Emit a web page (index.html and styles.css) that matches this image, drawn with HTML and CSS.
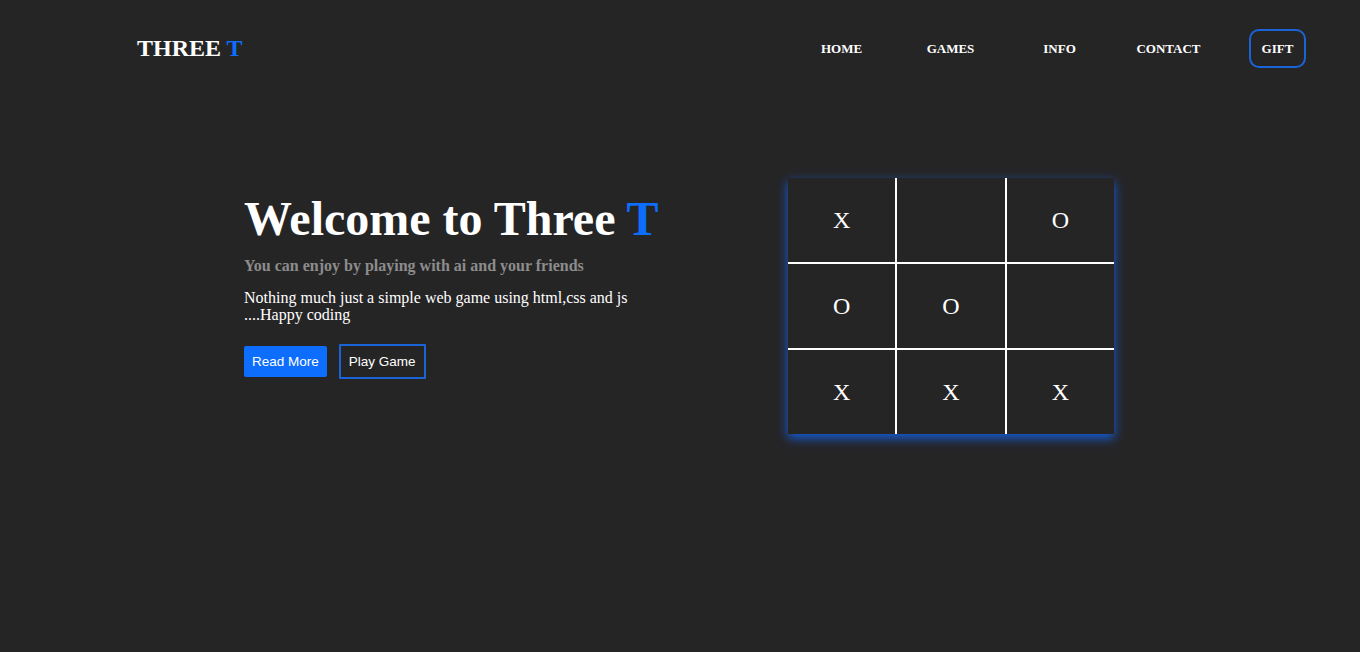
FILE: index.html
```html
<!DOCTYPE html>
<html lang="en">
<head>
<meta charset="utf-8">
<title>Three T</title>
<link rel="stylesheet" href="styles.css">
</head>
<body>
<header class="header">
  <div class="logo">THREE <span class="blue">T</span></div>
  <nav>
    <ul class="nav">
      <li><a href="#">HOME</a></li>
      <li><a href="#">GAMES</a></li>
      <li><a href="#">INFO</a></li>
      <li><a href="#">CONTACT</a></li>
      <li><a href="#" class="gift">GIFT</a></li>
    </ul>
  </nav>
</header>
<main class="hero">
  <section class="intro">
    <h1 class="title">Welcome to Three <span class="blue">T</span></h1>
    <h5 class="subtitle">You can enjoy by playing with ai and your friends</h5>
    <p class="text">Nothing much just a simple web game using html,css and js ....Happy coding</p>
    <div class="actions">
      <a href="#" class="btn btn-primary">Read More</a>
      <a href="#" class="btn btn-outline">Play Game</a>
    </div>
  </section>
  <section class="board">
    <div class="cell">X</div>
    <div class="cell"></div>
    <div class="cell">O</div>
    <div class="cell">O</div>
    <div class="cell">O</div>
    <div class="cell"></div>
    <div class="cell">X</div>
    <div class="cell">X</div>
    <div class="cell">X</div>
  </section>
</main>
</body>
</html>
```
FILE: styles.css
```css
* { box-sizing: border-box; }
html, body { margin: 0; padding: 0; }
body {
  background: #262526;
  color: #ffffff;
  font-family: "Liberation Serif", "Times New Roman", serif;
  height: 652px;
  overflow: hidden;
}
.blue { color: #0d6efd; }

.header {
  height: 96px;
  display: flex;
  align-items: center;
  justify-content: space-between;
  padding: 0 28px 0 137px;
}
.logo {
  font-size: 24px;
  font-weight: bold;
  line-height: 1;
}
.nav {
  list-style: none;
  margin: 0;
  padding: 0;
  display: flex;
  align-items: center;
}
.nav li {
  width: 109px;
  display: flex;
  justify-content: center;
}
.nav a {
  color: #ffffff;
  text-decoration: none;
  font-weight: bold;
  font-size: 13px;
  line-height: 15px;
}
.nav a.gift {
  border: 2px solid #1b63d8;
  border-radius: 10px;
  padding: 10px 11px;
  display: inline-block;
}

.hero {
  display: flex;
  align-items: flex-start;
  padding: 82px 0 0 244px;
}
.intro {
  width: 420px;
  margin-right: 124px;
  padding-top: 17px;
}
.title {
  margin: 0;
  font-size: 48px;
  line-height: 48px;
  font-weight: bold;
  white-space: nowrap;
}
.subtitle {
  margin: 13px 0 0;
  font-size: 16px;
  line-height: 20px;
  font-weight: bold;
  color: #8c8c8c;
}
.text {
  margin: 14px 0 0;
  font-size: 16px;
  line-height: 16.5px;
}
.actions {
  display: flex;
  align-items: center;
  gap: 12px;
  margin-top: 21px;
}
.btn {
  font-family: "Liberation Sans", Arial, sans-serif;
  font-size: 13.5px;
  line-height: 15px;
  color: #ffffff;
  text-decoration: none;
  padding: 8px 8px;
  border-radius: 2px;
  display: inline-block;
}
.btn-primary { background: #0d6efd; }
.btn-outline { border: 2px solid #1b63d8; border-radius: 1px; }

.board {
  width: 326px;
  height: 256px;
  display: grid;
  grid-template-columns: repeat(3, 1fr);
  grid-template-rows: repeat(3, 1fr);
  gap: 2px;
  background: #ffffff;
  box-shadow: 0 4px 10px 0 rgba(20, 95, 225, 1);
}
.cell {
  background: #262526;
  display: flex;
  align-items: center;
  justify-content: center;
  font-size: 24px;
  color: #ffffff;
}
```
